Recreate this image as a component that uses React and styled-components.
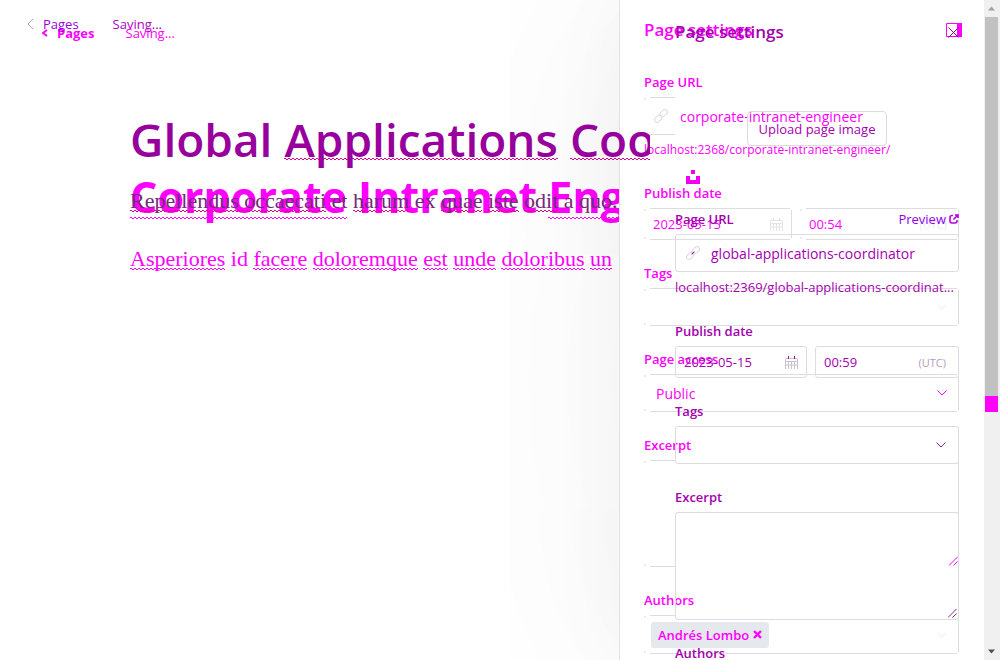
import React from "react";
import styled, { createGlobalStyle, css } from "styled-components";

const MAGENTA = "#ff00ff";
const PURPLE = "#a400ae";
const LINE = "#dddddd";

const GlobalStyle = createGlobalStyle`
  * { box-sizing: border-box; }
  html, body, #root { height: 100%; }
  body {
    margin: 0;
    background: #fff;
    overflow: hidden;
    font-family: "Open Sans", "Noto Sans", sans-serif;
    font-size: 13px;
  }
  input, select, textarea, button { font: inherit; margin: 0; }
  h1, h2, p { margin: 0; }
`;

const Stage = styled.div`
  position: relative;
  min-height: 100vh;
  height: 100%;
  overflow: hidden;
`;

/* One capture of the screen; the second one lies over the first. */
const Layer = styled.div`
  display: flex;
  height: 100%;
  color: ${(p) => (p.$over ? PURPLE : MAGENTA)};
  ${(p) =>
    p.$over &&
    css`
      position: absolute;
      inset: 0;
    `}
`;

const Editor = styled.main`
  flex: 1;
  min-width: 0;
  overflow: hidden;
  white-space: nowrap;
`;

const TopBar = styled.nav`
  display: flex;
  align-items: center;
  height: 20px;
  margin-top: ${(p) => (p.$over ? 14 : 23)}px;
  padding-left: ${(p) => (p.$over ? 27 : 42)}px;
  gap: ${(p) => (p.$over ? 34 : 31)}px;
  font-size: 13px;
`;

const BackLink = styled.a`
  display: flex;
  align-items: center;
  gap: 9px;
  color: inherit;
  font-weight: ${(p) => (p.$strong ? 700 : 400)};
  text-decoration: none;
`;

const Heading = styled.h1`
  margin-top: ${(p) => (p.$over ? 75 : 124)}px;
  padding-left: 130px;
  font-size: ${(p) => (p.$over ? 46 : 43)}px;
  line-height: 60px;
  font-weight: ${(p) => (p.$over ? 600 : 700)};
  color: ${(p) => (p.$over ? "#98009e" : MAGENTA)};
`;

const Paragraph = styled.p`
  margin-top: ${(p) => (p.$over ? 17 : 17)}px;
  padding-left: 130px;
  font-family: "Liberation Serif", serif;
  font-size: 22px;
  line-height: 30px;
  color: ${(p) => (p.$over ? "#712b78" : MAGENTA)};
`;

const Misspelled = styled.span`
  --wave: ${(p) => p.$wave || MAGENTA};
  padding-bottom: 1px;
  background-image: linear-gradient(90deg, var(--wave) 50%, transparent 50%),
    linear-gradient(90deg, transparent 50%, var(--wave) 50%);
  background-size: 4px 1px, 4px 1px;
  background-repeat: repeat-x;
  background-position: 0 calc(100% - ${(p) => p.$lift || 2}px - 1px),
    0 calc(100% - ${(p) => p.$lift || 2}px);
`;
const OldMisspelled = styled(Misspelled)`
  --wave: #e0008c;
`;
const Ink = styled.span`
  color: ${(p) => p.$color};
`;

const Panel = styled.aside`
  flex: none;
  width: ${(p) => (p.$over ? 350 : 381)}px;
  padding: ${(p) => (p.$over ? "0 41px 0 25px" : "0 41px 0 24px")};
  ${(p) =>
    !p.$over &&
    css`
      background: #fff;
      border-left: 1px solid #e3e3e3;
      box-shadow: 0 0 280px rgba(0, 0, 0, 0.06), 0 0 80px rgba(0, 0, 0, 0.04);
    `}
`;

const PanelHeader = styled.header`
  display: flex;
  align-items: center;
  justify-content: space-between;
  height: 24px;
  margin-top: ${(p) => (p.$over ? 20 : 18)}px;
  margin-right: ${(p) => (p.$over ? 0 : -3)}px;
`;

const PanelTitle = styled.h2`
  font-size: 17px;
  line-height: 24px;
  font-weight: 600;
`;

const IconButton = styled.button`
  display: flex;
  padding: 0;
  border: 0;
  background: none;
  color: inherit;
`;

const Upload = styled.div`
  display: flex;
  flex-direction: column;
  margin-top: 67px;
  height: 98px;
`;
const UploadButton = styled.button`
  align-self: center;
  width: 140px;
  height: 35px;
  padding: 0;
  border: 1px solid ${LINE};
  border-radius: 4px;
  background: transparent;
  color: inherit;
  font-size: 13px;
`;
const UnsplashButton = styled(IconButton)`
  margin: 24px 0 0 11px;
`;

const Fields = styled.div`
  display: flex;
  flex-direction: column;
  gap: 23px;
  margin-top: ${(p) => p.$top || 0}px;
`;
const Field = styled.label`
  display: block;
  flex: 1;
`;
const LabelRow = styled.span`
  display: flex;
  justify-content: space-between;
  height: 20px;
  margin-bottom: 5px;
  line-height: 20px;
  font-weight: 600;
`;
const PreviewLink = styled.a`
  display: flex;
  align-items: center;
  gap: 3px;
  color: #8f00e8;
  font-weight: 400;
  text-decoration: none;
`;
const Help = styled.p`
  margin-top: 5px;
  font-size: ${(p) => (p.$over ? 13 : 12)}px;
  line-height: ${(p) => (p.$over ? 21 : 20)}px;
  overflow: hidden;
  white-space: nowrap;
  text-overflow: ellipsis;
`;
const DateRow = styled.div`
  display: flex;
  gap: 8px;
`;
const DateField = styled(Field)`
  flex: 0 0 ${(p) => (p.$over ? 132 : 148)}px;
`;

const line = `linear-gradient(${LINE}, ${LINE})`;
const corner = "linear-gradient(#ececec, #ececec)";

const Control = styled.span`
  display: flex;
  align-items: center;
  gap: ${(p) => p.$gap || 8}px;
  height: ${(p) => p.$h || 38}px;
  padding: 0 ${(p) => p.$pr || 12}px 0 ${(p) => p.$pl || 12}px;
  ${(p) =>
    p.$ghost
      ? css`
          background-image: ${line}, ${line}, ${line}, ${corner}, ${corner};
          background-repeat: no-repeat;
          background-size: ${p.$top === "stub" ? "25px" : "calc(100% - 8px)"} 1px,
            ${p.$bottom === "stub" ? "25px" : "calc(100% - 8px)"} 1px,
            1px ${p.$side === "none" ? "0" : "calc(100% - 4px)"}, 2px 2px, 2px 2px;
          background-position: 6px 0, 6px 100%, 100% 2px, 0 1px, 0 calc(100% - 1px);
        `
      : css`
          border: 1px solid ${LINE};
          border-radius: 3px;
        `}
`;

const bare = css`
  flex: 1;
  min-width: 0;
  width: 100%;
  padding: 0;
  border: 0;
  outline: 0;
  background: transparent;
  color: inherit;
`;
const TextInput = styled.input`
  ${bare}
  height: 24px;
  font-size: ${(p) => (p.$large ? 14 : 13)}px;
`;
const Select = styled.select`
  ${bare}
  appearance: none;
  height: 24px;
  font-size: 14px;
`;
const TextArea = styled.textarea`
  ${bare}
  height: 100%;
  resize: none;
`;
const AreaControl = styled(Control)`
  align-items: flex-end;
  padding: 0 1px 1px 12px;
`;
const Zone = styled.span`
  color: ${(p) => (p.$faint ? "#f2e6f2" : "#b89abb")};
  font-size: 11px;
`;

const Chip = styled.span`
  display: flex;
  flex: none;
  align-items: center;
  gap: 4px;
  height: 26px;
  padding: 0 7px;
  border-radius: 3px;
  background: #e5e9ed;
  font-weight: 600;
`;

const ScrollBar = styled.div`
  position: absolute;
  inset: 0 0 0 auto;
  display: flex;
  flex-direction: column;
  align-items: center;
  width: 16px;
  padding: 6px 1px 6px 0;
  background: #f0f0f0;
`;
const Thumb = styled.div`
  flex: 0 0 61%;
  width: 13px;
  margin: 6px 0 auto;
  background: #c1c1c1;
  border-bottom: 16px solid ${MAGENTA};
`;

const Chevron = ({ color, size = 10 }) => (
  <svg width={size} height="6" viewBox="0 0 10 6" fill="none" stroke={color}>
    <path d="M.5 .5 5 5 9.5 .5" />
  </svg>
);
const Back = ({ color, w, h, stroke }) => (
  <svg width={w} height={h} viewBox={`0 0 ${w} ${h}`} fill="none" stroke={color} strokeWidth={stroke}>
    <path d={`M${w - 1} 1 1 ${h / 2} ${w - 1} ${h - 1}`} />
  </svg>
);
const LinkIcon = ({ dot }) => (
  <svg width="14" height="14" viewBox="0 0 14 14" fill="none" stroke="#dcdcdc">
    <g transform="rotate(-45 7 7)">
      <rect x="-1" y="4.5" width="8" height="5" rx="2.5" />
      <rect x="7" y="4.5" width="8" height="5" rx="2.5" />
      <path d="M5 7h4" stroke={dot} />
    </g>
  </svg>
);
const Calendar = ({ color, pins }) => (
  <svg width="13" height="13" viewBox="0 0 13 13" fill="none" stroke={color}>
    <path d="M.5 2.5h12M.5 5.5h12M.5 9h12M.5 3v10M3.5 5v8M6.5 5v8M9.5 5v8M12.5 3v10" />
    <path d="M3.5 0v3M9.5 0v3" stroke={pins} />
  </svg>
);
const Resize = ({ color }) => (
  <svg width="9" height="9" viewBox="0 0 9 9" stroke={color} fill="none">
    <path d="M0 8.5 8.5 0M4.5 8.5l4-4" />
  </svg>
);
const External = () => (
  <svg width="10" height="10" viewBox="0 0 10 10" stroke="#b800e0" strokeWidth="1.6" fill="none">
    <path d="M4 1.500H3Q1 1.500 1 3.500V7q0 2 2 2h3q2 0 2-2V6M4.500 5.500 9 1M6 1h3v3" />
  </svg>
);
const PanelToggle = () => (
  <svg width="16" height="14" viewBox="0 0 16 14">
    <path d="M.5 .5h15v13H.5z" fill="none" stroke={MAGENTA} />
    <path d="M11 0h5v14h-5z" fill={MAGENTA} />
  </svg>
);
const Cross = () => (
  <svg width="11" height="11" viewBox="0 0 11 11" stroke="#8c008f" fill="none">
    <path d="M.5 .5l10 10M10.500 .5l-10 10" />
  </svg>
);
const ChipCross = () => (
  <svg width="9" height="9" viewBox="0 0 9 9" stroke={MAGENTA} strokeWidth="2.4">
    <path d="M1 1l7 7M8 1 1 8" />
  </svg>
);
const Unsplash = () => (
  <svg width="14" height="14" viewBox="0 0 14 14" fill="#ef00f5">
    <path d="M5 0h4v4H5zM0 6h4v4h6V6h4v8H0z" />
  </svg>
);
const Arrow = ({ up, color }) => (
  <svg width="7" height="5" viewBox="0 0 7 5" fill={color}>
    <path d={up ? "M0 4.500 3.500 .5 7 4.500z" : "M0 .5h7l-3.500 4z"} />
  </svg>
);

function CurrentScreen() {
  return (
    <Layer>
      <Editor>
        <TopBar>
          <BackLink href="#pages" $strong>
            <Back color={MAGENTA} w={6} h={8} stroke={2} />
            Pages
          </BackLink>
          <span>Saving...</span>
        </TopBar>
        <Heading>
          <Misspelled $lift={8}>Corporate</Misspelled> Intranet <Misspelled $lift={8}>Engineer</Misspelled>
        </Heading>
        <Paragraph>
          <Misspelled>Asperiores</Misspelled> id <Misspelled>facere</Misspelled>{" "}
          <Misspelled>doloremque</Misspelled> <Misspelled>est</Misspelled>{" "}
          <Misspelled>unde</Misspelled> <Misspelled>doloribus</Misspelled>{" "}
          <Misspelled>un</Misspelled>
        </Paragraph>
      </Editor>
      <Panel>
        <PanelHeader>
          <PanelTitle>Page settings</PanelTitle>
          <IconButton aria-label="Toggle settings">
            <PanelToggle />
          </IconButton>
        </PanelHeader>
        <Fields $top={30}>
          <div>
            <Field>
              <LabelRow>Page URL</LabelRow>
              <Control $ghost $top="stub" $bottom="stub" $side="none" $gap={12} $pl={10}>
                <LinkIcon dot="#e6e6e6" />
                <TextInput $large name="url" defaultValue="corporate-intranet-engineer" spellCheck={false} />
              </Control>
            </Field>
            <Help>localhost:2368/corporate-intranet-engineer/</Help>
          </div>
          <DateRow>
            <DateField>
              <LabelRow>Publish date</LabelRow>
              <Control $ghost $h={32} $pl={9} $pr={9}>
                <TextInput name="date" defaultValue="2023-05-15" />
                <Calendar color="#e4e4e4" pins="#dddddd" />
              </Control>
            </DateField>
            <Field>
              <LabelRow aria-label="Publish time" />
              <Control $ghost $h={32} $pl={9}>
                <TextInput name="time" defaultValue="00:54" />
                <Zone $faint>(UTC)</Zone>
              </Control>
            </Field>
          </DateRow>
          <Field>
            <LabelRow>Tags</LabelRow>
            <Control $ghost>
              <Select name="tags" />
              <Chevron color="#f1e8f1" />
            </Control>
          </Field>
          <Field>
            <LabelRow>Page access</LabelRow>
            <Control $ghost>
              <Select name="access">
                <option>Public</option>
              </Select>
              <Chevron color={MAGENTA} />
            </Control>
          </Field>
          <Field>
            <LabelRow>Excerpt</LabelRow>
            <AreaControl $ghost $top="stub" $bottom="stub" $h={107}>
              <TextArea name="excerpt" />
              <Resize color={MAGENTA} />
            </AreaControl>
          </Field>
          <Field as="div">
            <LabelRow>Authors</LabelRow>
            <Control $ghost $top="stub" $h={39} $pl={7}>
              <Chip>
                Andrés Lombo
                <IconButton aria-label="Remove author">
                  <ChipCross />
                </IconButton>
              </Chip>
              <Select name="authors" aria-label="Authors" />
              <Chevron color="#f1e8f1" />
            </Control>
          </Field>
        </Fields>
      </Panel>
    </Layer>
  );
}

function PreviousScreen() {
  return (
    <Layer $over>
      <Editor>
        <TopBar $over>
          <BackLink href="#pages">
            <Back color="#b9a0c8" w={7} h={12} stroke={1} />
            <Ink $color="#9a00e0">Pages</Ink>
          </BackLink>
          <Ink $color="#b000c0">Saving...</Ink>
        </TopBar>
        <Heading as="h2" $over>
          Global <OldMisspelled $lift={11}>Applications</OldMisspelled>{" "}
          <OldMisspelled $lift={11}>Coordinator</OldMisspelled>
        </Heading>
        <Paragraph $over>
          <OldMisspelled>Repellendus occaecati</OldMisspelled> et <OldMisspelled>harum</OldMisspelled> ex{" "}
          <OldMisspelled>quae</OldMisspelled> <OldMisspelled>iste</OldMisspelled>{" "}
          <OldMisspelled>odit</OldMisspelled> a quo.
        </Paragraph>
      </Editor>
      <Panel $over>
        <PanelHeader $over>
          <PanelTitle>Page settings</PanelTitle>
          <IconButton aria-label="Close settings">
            <Cross />
          </IconButton>
        </PanelHeader>
        <Upload>
          <UploadButton>Upload page image</UploadButton>
          <UnsplashButton aria-label="Choose from Unsplash">
            <Unsplash />
          </UnsplashButton>
        </Upload>
        <Fields>
          <div>
            <Field as="div">
              <LabelRow>
                <label htmlFor="previous-url">Page URL</label>
                <PreviewLink href="#preview">
                  Preview
                  <External />
                </PreviewLink>
              </LabelRow>
              <Control $gap={11} $pl={10}>
                <LinkIcon dot="#c000c8" />
                <TextInput $large id="previous-url" defaultValue="global-applications-coordinator" spellCheck={false} />
              </Control>
            </Field>
            <Help $over>localhost:2369/global-applications-coordinat...</Help>
          </div>
          <DateRow>
            <DateField $over>
              <LabelRow>Publish date</LabelRow>
              <Control $h={32} $pl={8} $pr={8}>
                <TextInput name="previous-date" defaultValue="2023-05-15" />
                <Calendar color="#c8c4c8" pins={PURPLE} />
              </Control>
            </DateField>
            <Field>
              <LabelRow aria-label="Publish time" />
              <Control $h={32} $pl={8}>
                <TextInput name="previous-time" defaultValue="00:59" />
                <Zone>(UTC)</Zone>
              </Control>
            </Field>
          </DateRow>
          <Field>
            <LabelRow>Tags</LabelRow>
            <Control>
              <Select name="previous-tags" />
              <Chevron color="#7d2a85" />
            </Control>
          </Field>
          <Field>
            <LabelRow>Excerpt</LabelRow>
            <AreaControl $h={108}>
              <TextArea name="previous-excerpt" />
              <Resize color="#7d2a85" />
            </AreaControl>
          </Field>
          <LabelRow as="div">Authors</LabelRow>
        </Fields>
      </Panel>
    </Layer>
  );
}

export default function App() {
  return (
    <Stage>
      <GlobalStyle />
      <CurrentScreen />
      <PreviousScreen />
      <ScrollBar>
        <Arrow up color="#a0a0a0" />
        <Thumb />
        <Arrow color="#505050" />
      </ScrollBar>
    </Stage>
  );
}
